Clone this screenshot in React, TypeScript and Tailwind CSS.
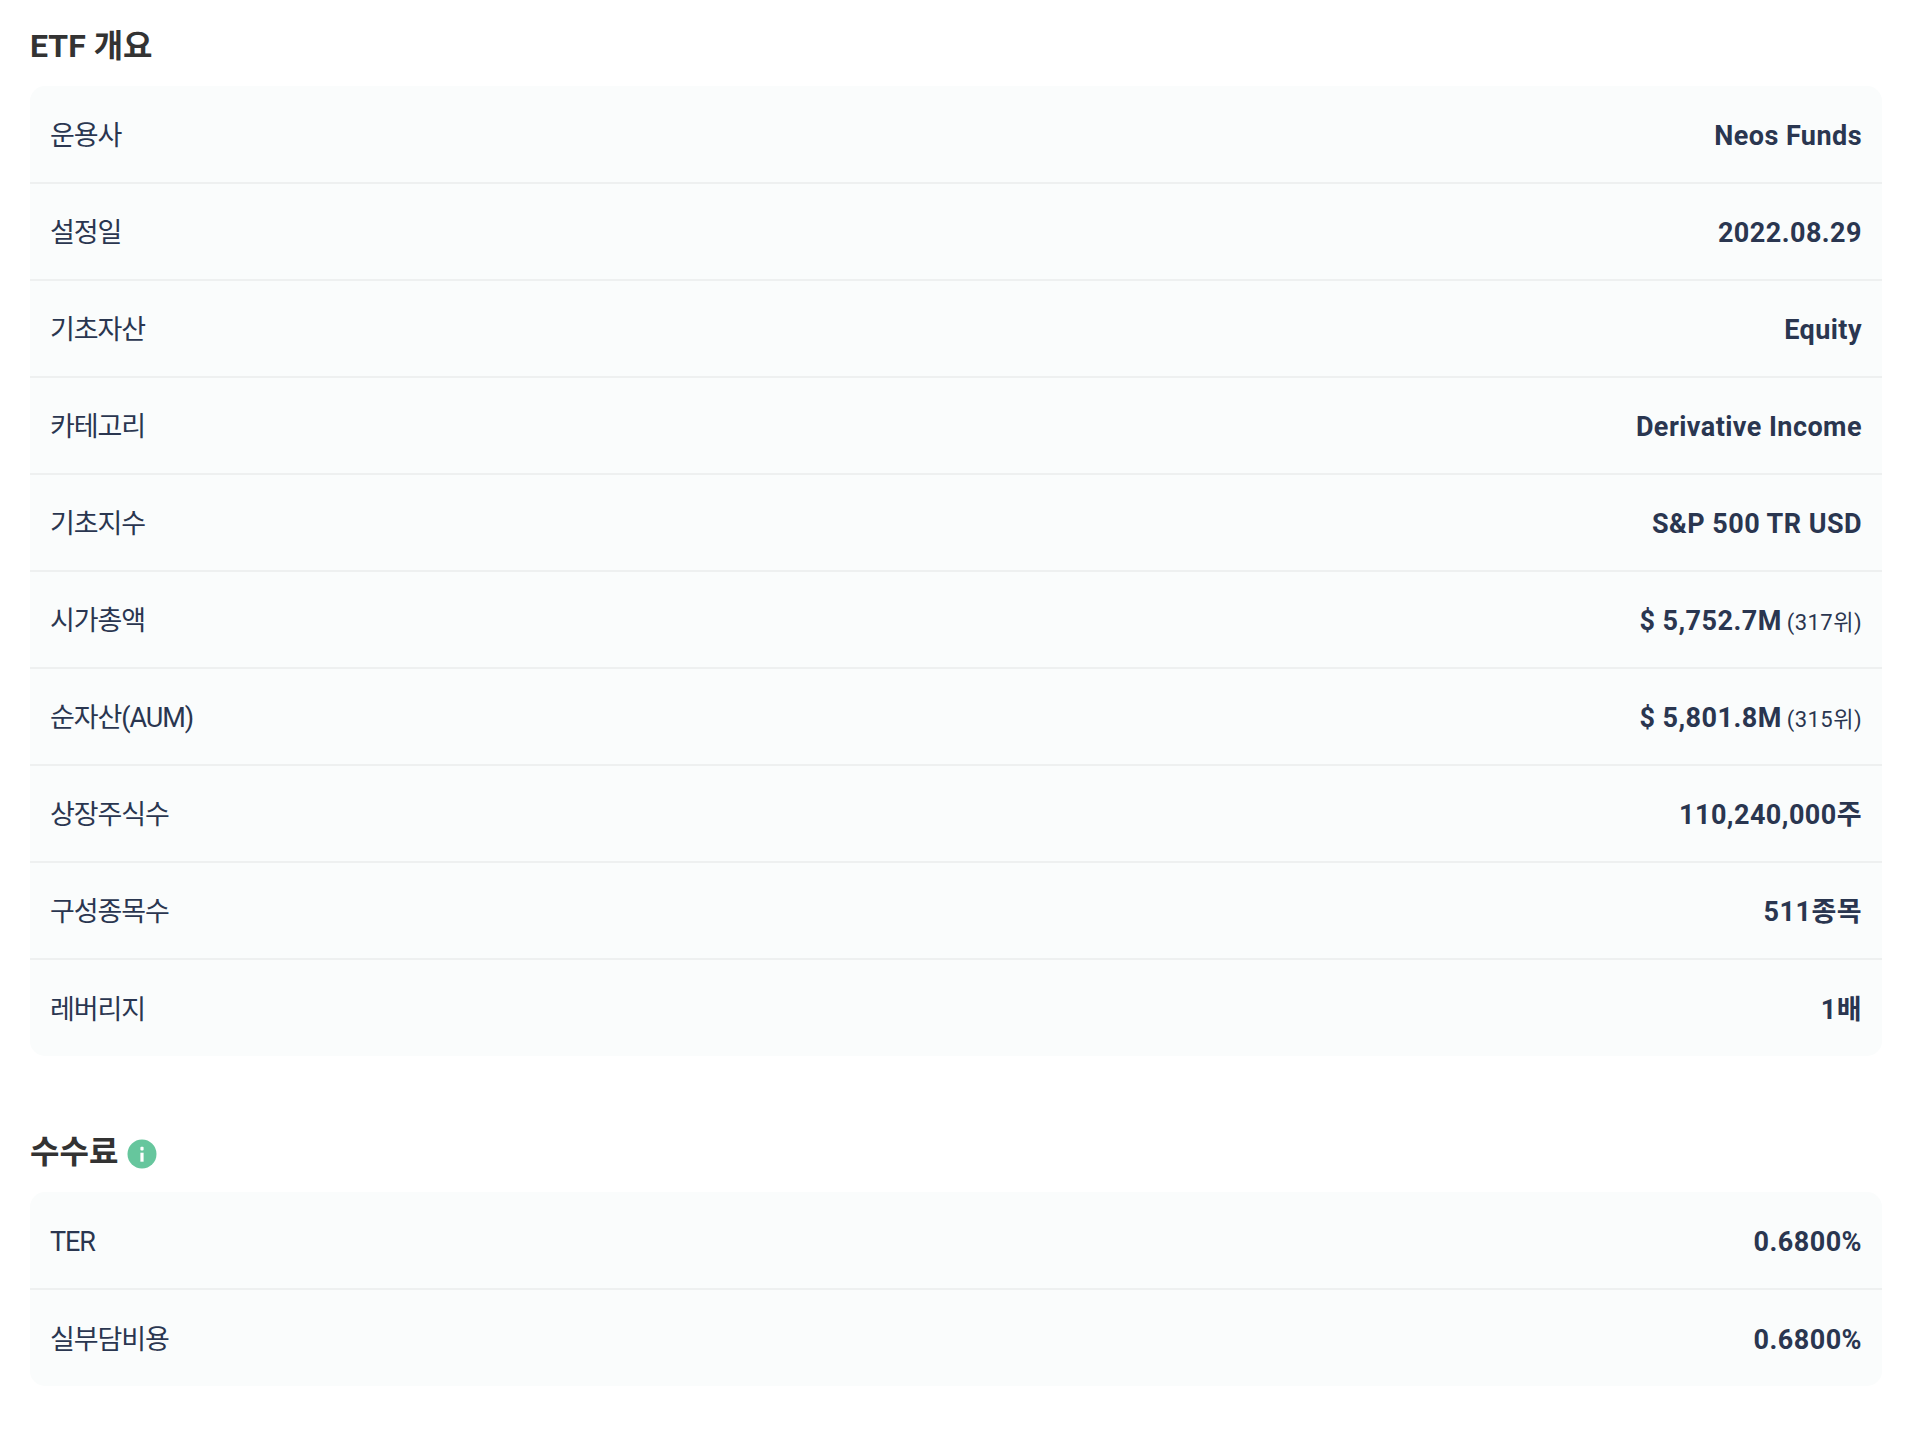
const overview: { label: string; value: string; rank?: string }[] = [
  { label: '운용사', value: 'Neos Funds' },
  { label: '설정일', value: '2022.08.29' },
  { label: '기초자산', value: 'Equity' },
  { label: '카테고리', value: 'Derivative Income' },
  { label: '기초지수', value: 'S&P 500 TR USD' },
  { label: '시가총액', value: '$ 5,752.7M', rank: '(317위)' },
  { label: '순자산(AUM)', value: '$ 5,801.8M', rank: '(315위)' },
  { label: '상장주식수', value: '110,240,000주' },
  { label: '구성종목수', value: '511종목' },
  { label: '레버리지', value: '1배' },
];

const fees = [
  { label: 'TER', value: '0.6800%' },
  { label: '실부담비용', value: '0.6800%' },
];

function InfoCard({ rows }: { rows: { label: string; value: string; rank?: string }[] }) {
  return (
    <div className="overflow-hidden rounded-[15px] bg-[#fafcfc] pt-[1px]">
      {rows.map((row, i) => (
        <div
          key={row.label}
          className={`flex items-center justify-between px-5 pt-[4px] ${i < rows.length - 1 ? 'h-[97px] border-b-2 border-[#eef0f0]' : 'h-[96px]'}`}
        >
          <span className="text-[27px] font-normal tracking-[-0.04em] text-[#2a3650]">{row.label}</span>
          <span className="text-[27px] font-bold tracking-[0.45px] text-[#2a3650]">
            {row.value}
            {row.rank && <span className="ml-[5px] text-[22px] font-normal">{row.rank}</span>}
          </span>
        </div>
      ))}
    </div>
  );
}

export default function App() {
  return (
    <div className="min-h-[1430px] bg-white pr-[32px] pl-[30px] pt-[24px] font-['Roboto','Noto_Sans_CJK_KR',sans-serif]">
      <h2 className="mb-[18px] h-[44px] text-[32px] leading-[44px] font-bold text-[#333333]">ETF 개요</h2>
      <InfoCard rows={overview} />
      <div className="mt-[75px] mb-[19px] flex h-[42px] items-center gap-[9px]">
        <h2 className="text-[32px] font-bold text-[#333333]">수수료</h2>
        <svg className="mt-[3px] h-[30px] w-[30px]" viewBox="0 0 30 30">
          <circle cx="15" cy="15" r="14.5" fill="#66c69d" />
          <rect x="13.4" y="13.7" width="3.2" height="9" fill="#fff" />
          <rect x="13.4" y="7.8" width="3.2" height="3.6" rx="1" fill="#fff" />
        </svg>
      </div>
      <InfoCard rows={fees} />
    </div>
  );
}
